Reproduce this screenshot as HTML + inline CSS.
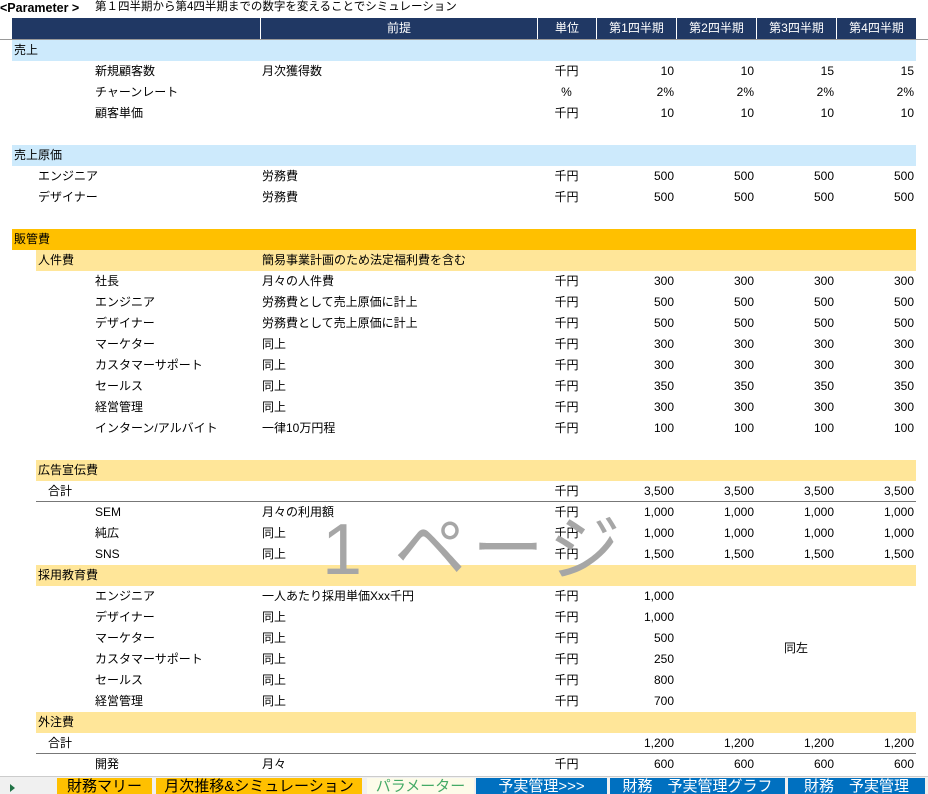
<!DOCTYPE html>
<html><head><meta charset="utf-8"><style>
*{margin:0;padding:0;box-sizing:border-box}
body{width:928px;height:794px;overflow:hidden;background:#fff;font-family:"Liberation Sans","Noto Sans CJK JP",sans-serif;font-size:12px;color:#000;position:relative}
.a{position:absolute;white-space:nowrap;line-height:21px;height:21px}
.r{text-align:right}
.c{text-align:center}
.band{position:absolute;height:21px}
.hd{position:absolute;top:18px;height:21px;background:#203864;color:#fff;line-height:21px;text-align:center;border-left:1px solid #fff}
.tab{position:absolute;top:778px;height:16px;font-size:15px;line-height:17px;text-align:center;overflow:hidden;white-space:nowrap}
</style></head><body>
<div class="a" style="left:0;top:-2px;font-weight:bold;font-size:12.5px">&lt;Parameter &gt;</div>
<div class="a" style="left:95px;top:-3px;font-size:11.5px">第１四半期から第4四半期までの数字を変えることでシミュレーション</div>
<div class="hd" style="left:12px;width:248px;border-left:none"></div>
<div class="hd" style="left:260px;width:277px">前提</div>
<div class="hd" style="left:537px;width:59px">単位</div>
<div class="hd" style="left:596px;width:80px">第1四半期</div>
<div class="hd" style="left:676px;width:80px">第2四半期</div>
<div class="hd" style="left:756px;width:80px">第3四半期</div>
<div class="hd" style="left:836px;width:80px">第4四半期</div>
<div style="position:absolute;left:0;top:39px;width:928px;height:1px;background:#999"></div>

<div class="band" style="left:12px;width:904px;top:40px;background:#cdeafc"></div>
<div class="band" style="left:12px;width:904px;top:145px;background:#cdeafc"></div>
<div class="band" style="left:12px;width:904px;top:229px;background:#ffc000"></div>
<div class="band" style="left:36px;width:880px;top:250px;background:#ffe699"></div>
<div class="band" style="left:36px;width:880px;top:460px;background:#ffe699"></div>
<div class="band" style="left:36px;width:880px;top:565px;background:#ffe699"></div>
<div class="band" style="left:36px;width:880px;top:712px;background:#ffe699"></div>
<div style="position:absolute;left:36px;top:501px;width:880px;height:1px;background:#777"></div>
<div style="position:absolute;left:36px;top:753px;width:880px;height:1px;background:#777"></div>

<div id="rows"></div>
<script>
var R=[
[0,14,"売上"],
[1,95,"新規顧客数","月次獲得数","千円",["10","10","15","15"]],
[2,95,"チャーンレート","","%",["2%","2%","2%","2%"]],
[3,95,"顧客単価","","千円",["10","10","10","10"]],
[5,14,"売上原価"],
[6,38,"エンジニア","労務費","千円",["500","500","500","500"]],
[7,38,"デザイナー","労務費","千円",["500","500","500","500"]],
[9,14,"販管費"],
[10,38,"人件費","簡易事業計画のため法定福利費を含む"],
[11,95,"社長","月々の人件費","千円",["300","300","300","300"]],
[12,95,"エンジニア","労務費として売上原価に計上","千円",["500","500","500","500"]],
[13,95,"デザイナー","労務費として売上原価に計上","千円",["500","500","500","500"]],
[14,95,"マーケター","同上","千円",["300","300","300","300"]],
[15,95,"カスタマーサポート","同上","千円",["300","300","300","300"]],
[16,95,"セールス","同上","千円",["350","350","350","350"]],
[17,95,"経営管理","同上","千円",["300","300","300","300"]],
[18,95,"インターン/アルバイト","一律10万円程","千円",["100","100","100","100"]],
[20,38,"広告宣伝費"],
[21,48,"合計","","千円",["3,500","3,500","3,500","3,500"]],
[22,95,"SEM","月々の利用額","千円",["1,000","1,000","1,000","1,000"]],
[23,95,"純広","同上","千円",["1,000","1,000","1,000","1,000"]],
[24,95,"SNS","同上","千円",["1,500","1,500","1,500","1,500"]],
[25,38,"採用教育費"],
[26,95,"エンジニア","一人あたり採用単価Xxx千円","千円",["1,000"]],
[27,95,"デザイナー","同上","千円",["1,000"]],
[28,95,"マーケター","同上","千円",["500"]],
[29,95,"カスタマーサポート","同上","千円",["250"]],
[30,95,"セールス","同上","千円",["800"]],
[31,95,"経営管理","同上","千円",["700"]],
[32,38,"外注費"],
[33,48,"合計","","",["1,200","1,200","1,200","1,200"]],
[34,95,"開発","月々","千円",["600","600","600","600"]]
];
var h="";
R.forEach(function(r){var t=40+21*r[0];
h+='<div class="a" style="left:'+r[1]+'px;top:'+t+'px">'+r[2]+'</div>';
if(r[3])h+='<div class="a" style="left:262px;top:'+t+'px">'+r[3]+'</div>';
if(r[4])h+='<div class="a c" style="left:537px;width:59px;top:'+t+'px">'+r[4]+'</div>';
if(r[5])r[5].forEach(function(v,i){h+='<div class="a r" style="left:'+(596+80*i)+'px;width:78px;top:'+t+'px">'+v+'</div>';});
});
h+='<div class="a c" style="left:756px;width:80px;top:638px">同左</div>';
document.getElementById("rows").innerHTML=h;
</script>
<div style="position:absolute;left:322px;top:505px;font-size:72px;line-height:90px;color:#a6a6a6;white-space:nowrap;letter-spacing:6px">1 ページ</div>

<div style="position:absolute;left:0;top:776px;width:928px;height:18px;background:#f0f0f0;border-top:1px solid #ccc"></div>
<div style="position:absolute;left:10px;top:784px;width:0;height:0;border-left:5px solid #217346;border-top:4px solid transparent;border-bottom:4px solid transparent"></div>
<div class="tab" style="left:57px;width:95px;background:#ffc000">財務マリー</div>
<div class="tab" style="left:156px;width:206px;background:#ffc000">月次推移&amp;シミュレーション</div>
<div class="tab" style="left:367px;width:107px;background:#fdfbe9;color:#4a6">パラメーター</div>
<div class="tab" style="left:476px;width:131px;background:#0070c0;color:#fff">予実管理&gt;&gt;&gt;</div>
<div class="tab" style="left:610px;width:175px;background:#0070c0;color:#fff">財務　予実管理グラフ</div>
<div class="tab" style="left:788px;width:137px;background:#0070c0;color:#fff">財務　予実管理</div>
</body></html>
